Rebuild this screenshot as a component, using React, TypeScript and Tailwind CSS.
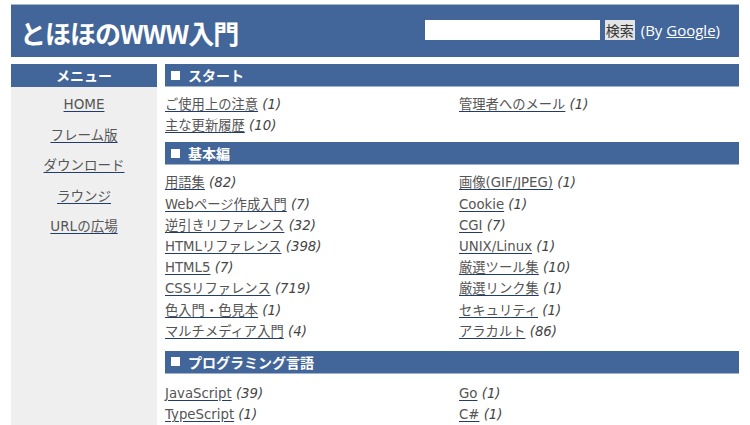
import React from "react";

const font = { fontFamily: '"DejaVu Sans", "Noto Sans CJK JP", sans-serif' };

type Item = { t: string; n: number };

function Link({ t, n }: Item) {
  return (
    <div className="h-[21.2px] leading-[21px] whitespace-nowrap">
      <a href="#" className="text-[#555] underline decoration-[#223d6b] underline-offset-2">{t}</a>
      <span className="italic text-[#444]"> ({n})</span>
    </div>
  );
}

function Section({ title, left, right, extra }: { title: string; left: Item[]; right: Item[]; extra?: boolean }) {
  return (
    <div className={extra ? "pt-[3px] mb-[6px]" : "mb-[6px]"}>
      <div className="h-[23px] bg-[#43669a] border-b border-[#9fb2cc] text-white font-bold text-[14px] leading-[22px] pl-[6px] flex items-center gap-[8px]" style={{ fontFamily: '"Noto Sans CJK JP", sans-serif' }}>
        <span className="inline-block w-[9px] h-[9px] bg-white" />
        <span>{title}</span>
      </div>
      <div className={extra ? "grid grid-cols-[294px_1fr] pt-[9px]" : "grid grid-cols-[294px_1fr] pt-[7px]"}>
        <div>{left.map((i) => <Link key={i.t} {...i} />)}</div>
        <div>{right.map((i) => <Link key={i.t} {...i} />)}</div>
      </div>
    </div>
  );
}

export default function App() {
  return (
    <div className="w-[750px] h-[425px] overflow-hidden bg-white text-[13.3px] px-[11px] pt-[4px]" style={font}>
      <div className="h-[53px] bg-[#43669a] border-t border-[#a6b6cc] flex items-center justify-between pl-[9px] pr-[19px]">
        <div className="text-white font-bold text-[26px] tracking-[-1px] mt-[3px]" style={{ fontFamily: '"Noto Sans CJK JP", sans-serif' }}>とほほのWWW入門</div>
        <div className="flex items-center text-white text-[14px] mb-[2px]">
          <input className="w-[175px] h-[20px] bg-white border-0 outline-none" />
          <button className="ml-[5px] h-[20px] px-[1px] bg-[#e4e4e4] text-[#333] text-[14px] leading-[20px]" style={{ fontFamily: '"Noto Sans CJK JP", sans-serif' }}>検索</button>
          <span className="ml-[6px]" style={{ fontFamily: '"Open Sans", sans-serif', fontSize: "15px" }}>(By <a href="#" className="underline">Google</a>)</span>
        </div>
      </div>
      <div className="flex gap-[8px] mt-[7px]">
        <div className="w-[146px] shrink-0 bg-[#efefef] h-[400px]">
          <div className="h-[23px] bg-[#43669a] text-white font-bold text-[14px] leading-[23px] text-center" style={{ fontFamily: '"Noto Sans CJK JP", sans-serif' }}>メニュー</div>
          <div className="flex flex-col items-center pt-[2px] text-[13.5px]">
            {["HOME", "フレーム版", "ダウンロード", "ラウンジ", "URLの広場"].map((m) => (
              <a key={m} href="#" className="h-[30.5px] leading-[30px] text-[#555] underline decoration-[#223d6b] underline-offset-2">{m}</a>
            ))}
          </div>
        </div>
        <div className="flex-1">
          <Section
            title="スタート"
            left={[{ t: "ご使用上の注意", n: 1 }, { t: "主な更新履歴", n: 10 }]}
            right={[{ t: "管理者へのメール", n: 1 }]}
          />
          <Section
            title="基本編"
            left={[
              { t: "用語集", n: 82 },
              { t: "Webページ作成入門", n: 7 },
              { t: "逆引きリファレンス", n: 32 },
              { t: "HTMLリファレンス", n: 398 },
              { t: "HTML5", n: 7 },
              { t: "CSSリファレンス", n: 719 },
              { t: "色入門・色見本", n: 1 },
              { t: "マルチメディア入門", n: 4 },
            ]}
            right={[
              { t: "画像(GIF/JPEG)", n: 1 },
              { t: "Cookie", n: 1 },
              { t: "CGI", n: 7 },
              { t: "UNIX/Linux", n: 1 },
              { t: "厳選ツール集", n: 10 },
              { t: "厳選リンク集", n: 1 },
              { t: "セキュリティ", n: 1 },
              { t: "アラカルト", n: 86 },
            ]}
          />
          <Section
            extra
            title="プログラミング言語"
            left={[{ t: "JavaScript", n: 39 }, { t: "TypeScript", n: 1 }]}
            right={[{ t: "Go", n: 1 }, { t: "C#", n: 1 }]}
          />
        </div>
      </div>
    </div>
  );
}
